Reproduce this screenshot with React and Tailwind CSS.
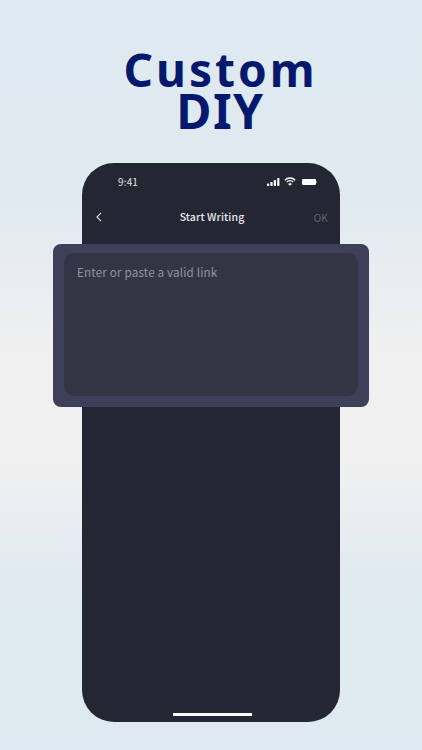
import React from "react";

export default function App() {
  return (
    <div className="w-[422px] h-[750px] overflow-hidden flex flex-col items-center pt-[49px] bg-[linear-gradient(180deg,#dfe9f1_0%,#e1eaf1_28%,#f0f0f1_47%,#f0f0f1_62%,#e1eaf1_76%,#deeaf1_100%)] font-['Noto_Sans_CJK_SC','Noto_Sans',sans-serif]">
      <h1 className="text-[#04196e] font-bold text-[46px] leading-[41px] tracking-[3px] pl-[19px] text-center font-['Noto_Sans',sans-serif]">
        Custom
        <br />
        <span className="text-[48px] tracking-[1.5px]">DIY</span>
      </h1>
      <div className="relative w-[258px] h-[559px] mt-[31px] bg-[#252633] rounded-[32px] flex flex-col shrink-0">
        <div className="flex items-center justify-between h-[17px] mt-[10px] pl-[36px] pr-[23px] text-white">
          <span className="text-[10px] tracking-[0.15px] text-[#e4e4e8]">9:41</span>
          <div className="flex items-center gap-[4px]">
            <svg width="13" height="8" viewBox="0 0 13 8" fill="#fff">
              <rect x="0" y="5.5" width="2.2" height="2.5" rx=".4" />
              <rect x="3.4" y="4" width="2.2" height="4" rx=".4" />
              <rect x="6.8" y="2" width="2.2" height="6" rx=".4" />
              <rect x="10.2" y="0" width="2.2" height="8" rx=".4" />
            </svg>
            <svg width="12" height="9" viewBox="0 0 12 9" fill="none" stroke="#fff" strokeWidth="1.4">
              <path d="M.8 3.2a7.4 7.4 0 0 1 10.4 0" />
              <path d="M2.7 5.1a4.7 4.7 0 0 1 6.6 0" />
              <path d="M4.5 6.9a2.1 2.1 0 0 1 3 0L6 8.4z" fill="#fff" strokeWidth=".6" />
            </svg>
            <div className="flex items-center ml-[2px]">
              <div className="w-[14px] h-[6px] bg-white rounded-[1px]" />
              <div className="w-[1px] h-[2px] bg-[#8a8a92]" />
            </div>
          </div>
        </div>
        <div className="flex items-center justify-between h-[20px] mt-[17px] pl-[14px] pr-[12px]">
          <div className="w-[20px] flex">
            <svg width="6" height="10" viewBox="0 0 6 10" fill="none" stroke="#d8d8de" strokeWidth="1.2">
              <path d="M5 .8 1 5l4 4.2" />
            </svg>
          </div>
          <span className="text-[10.5px] tracking-[0.1px] font-medium text-[#e8e8ec]">Start Writing</span>
          <span className="w-[20px] text-right text-[10px] tracking-[0.2px] text-[#636470]">OK</span>
        </div>
        <div className="mt-auto mb-[6px] ml-[91px] w-[79px] h-[3px] bg-white" />
        <div className="absolute left-[-29px] top-[81px] w-[316px] h-[163px] bg-[#3e3f58] rounded-[8px] pt-[9px] pr-[11px] pb-[11px] pl-[11px]">
          <div className="w-full h-full bg-[#343544] rounded-[10px] pt-[9px] pl-[13px]">
            <p className="text-[11.7px] tracking-[0.15px] leading-[20px] text-[#9192a0]">Enter or paste a valid link</p>
          </div>
        </div>
      </div>
    </div>
  );
}
